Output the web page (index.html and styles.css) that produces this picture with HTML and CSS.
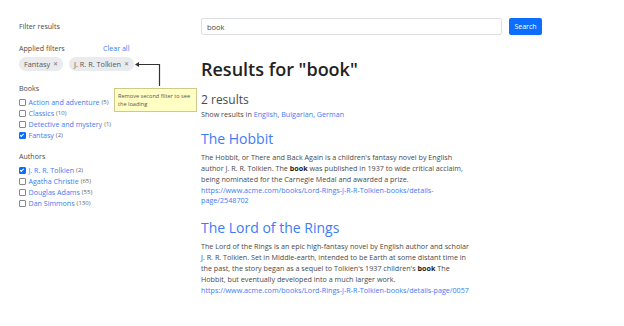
FILE: index.html
```html
<!DOCTYPE html>
<html lang="en">

<head>
    <meta charset="UTF-8">
    <meta name="viewport" content="width=device-width, initial-scale=1.0">
    <title>Search results</title>
    <link rel="stylesheet" href="styles.css">
</head>

<body>
    <div class="page">
        <!-- Filters -->
        <aside class="sidebar">
            <div class="filter-title">Filter results</div>

            <div class="applied-head">
                <span>Applied filters</span>
                <a href="#" class="clear-all">Clear all</a>
            </div>
            <div class="chips">
                <span class="chip">Fantasy <span class="chip-x">&#x2715;</span></span>
                <span class="chip chip-noted">J. R. R. Tolkien <span class="chip-x">&#x2715;</span>
                    <!-- arrow from the note to this chip -->
                    <svg class="note-line" width="30" height="26" viewBox="0 0 30 26">
                        <path d="M2 4.5 H24.5 V26" fill="none" stroke="#333" stroke-width="1.2"/>
                        <path d="M0 4.5 L4 2 L4 7 Z" fill="#333"/>
                    </svg>
                </span>
                <div class="note">Remove second filter to see the loading</div>
            </div>

            <div class="group">
                <h4>Books</h4>
                <label class="check"><span class="box"></span><a href="#">Action and adventure</a> <span class="count">(5)</span></label>
                <label class="check"><span class="box"></span><a href="#">Classics</a> <span class="count">(10)</span></label>
                <label class="check"><span class="box"></span><a href="#">Detective and mystery</a> <span class="count">(1)</span></label>
                <label class="check"><span class="box checked"></span><a href="#">Fantasy</a> <span class="count">(2)</span></label>
            </div>

            <div class="group">
                <h4>Authors</h4>
                <label class="check"><span class="box checked"></span><a href="#">J. R. R. Tolkien</a> <span class="count">(2)</span></label>
                <label class="check"><span class="box"></span><a href="#">Agatha Christie</a> <span class="count">(65)</span></label>
                <label class="check"><span class="box"></span><a href="#">Douglas Adams</a> <span class="count">(55)</span></label>
                <label class="check"><span class="box"></span><a href="#">Dan Simmons</a> <span class="count">(130)</span></label>
            </div>
        </aside>

        <!-- Results -->
        <main class="main">
            <div class="search-row">
                <input type="text" class="search-input" value="book">
                <button class="search-btn">Search</button>
            </div>

            <h1>Results for "book"</h1>
            <div class="count-line">2 results</div>
            <div class="langs">Show results in <a href="#">English</a>, <a href="#">Bulgarian</a>, <a href="#">German</a></div>

            <div class="result">
                <h2><a href="#">The Hobbit</a></h2>
                <p>The Hobbit, or There and Back Again is a children's fantasy novel by English author J. R. R. Tolkien. The <b>book</b> was published in 1937 to wide critical acclaim, being nominated for the Carnegie Medal and awarded a prize.</p>
                <a href="#" class="url">https://www.acme.com/books/Lord-Rings-J-R-R-Tolkien-books/details-page/2548702</a>
            </div>

            <div class="result">
                <h2><a href="#">The Lord of the Rings</a></h2>
                <p>The Lord of the Rings is an epic high-fantasy novel by English author and scholar J. R. R. Tolkien. Set in Middle-earth, intended to be Earth at some distant time in the past, the story began as a sequel to Tolkien's 1937 children's <b>book</b> The Hobbit, but eventually developed into a much larger work.</p>
                <a href="#" class="url">https://www.acme.com/books/Lord-Rings-J-R-R-Tolkien-books/details-page/0057</a>
            </div>
        </main>
    </div>
</body>

</html>
```

FILE: styles.css
```css
body {
    margin: 0;
    font-family: "Open Sans", Arial, sans-serif;
    color: #4a4a4a;
    background-color: #fff;
}

a {
    color: #3d7cf5;
    text-decoration: none;
}

.page {
    display: flex;
    padding: 18px 0 0 19px;
}

/* Sidebar */
.sidebar {
    width: 182px;
    font-size: 7.1px;
}

.filter-title {
    line-height: 17px;
}

.applied-head {
    display: flex;
    margin-top: 8px;
    line-height: 11px;
}

.applied-head span {
    width: 84px;
}

.chips {
    position: relative;
    display: flex;
    gap: 6px;
    margin-top: 3px;
}

.chip {
    display: inline-flex;
    align-items: center;
    gap: 3px;
    height: 14px;
    padding: 0 5px;
    background-color: #e9ebee;
    border-radius: 7px;
    color: #555;
    font-size: 7.3px;
}

.chip-noted {
    position: relative;
}

.chip-x {
    font-size: 6px;
    color: #777;
}

.note-line {
    position: absolute;
    left: calc(100% + 1px);
    top: 3px;
}

.note {
    position: absolute;
    left: 95px;
    top: 31px;
    width: 75px;
    padding: 3px 3px;
    background-color: #ffffc4;
    border: 1px solid #cfc98c;
    font-size: 5.6px;
    line-height: 8px;
    color: #555;
}

.group {
    margin-top: 12px;
}

.group + .group {
    margin-top: 10px;
}

.group h4 {
    margin: 0 0 3px;
    font-size: 7.1px;
    font-weight: normal;
    line-height: 11px;
}

.check {
    display: flex;
    align-items: center;
    gap: 2px;
    line-height: 11px;
}

.box {
    width: 4.5px;
    height: 4.5px;
    margin-right: 1px;
    border: 1px solid #888;
    border-radius: 1px;
    background-color: #fff;
}

.box.checked {
    position: relative;
    border-color: #0d6efd;
    background-color: #0d6efd;
}

.box.checked::after {
    content: "";
    position: absolute;
    left: 1.3px;
    top: 0;
    width: 1.3px;
    height: 2.8px;
    border: solid #fff;
    border-width: 0 1px 1px 0;
    transform: rotate(45deg);
}

.count {
    font-size: 6px;
    color: #666;
}

/* Main column */
.main {
    width: 341px;
}

.search-row {
    display: flex;
    gap: 7px;
}

.search-input {
    flex: 1;
    height: 17px;
    box-sizing: border-box;
    padding: 0 5px;
    border: 1px solid #dde0e3;
    border-radius: 2px;
    font-family: inherit;
    font-size: 7.5px;
    color: #444;
}

.search-btn {
    width: 33px;
    height: 17px;
    padding: 0;
    border: none;
    border-radius: 2px;
    background-color: #0d6efd;
    color: white;
    font-family: inherit;
    font-size: 7px;
}

h1 {
    margin: 21px 0 0;
    font-size: 18px;
    font-weight: 600;
    line-height: 26px;
    color: #222;
}

.count-line {
    margin-top: 10px;
    font-size: 12px;
    line-height: 16px;
}

.langs {
    margin-top: 1px;
    font-size: 7.2px;
    line-height: 11px;
}

.result {
    width: 273px;
    margin-top: 10px;
}

.result + .result {
    margin-top: 14px;
}

.result h2 {
    margin: 0 0 4px;
    font-size: 14px;
    font-weight: normal;
    line-height: 18px;
}

.result p {
    margin: 0;
    font-size: 7.2px;
    line-height: 11px;
}

.result b {
    color: #222;
}

.url {
    display: block;
    font-size: 7.2px;
    line-height: 10px;
}
```
